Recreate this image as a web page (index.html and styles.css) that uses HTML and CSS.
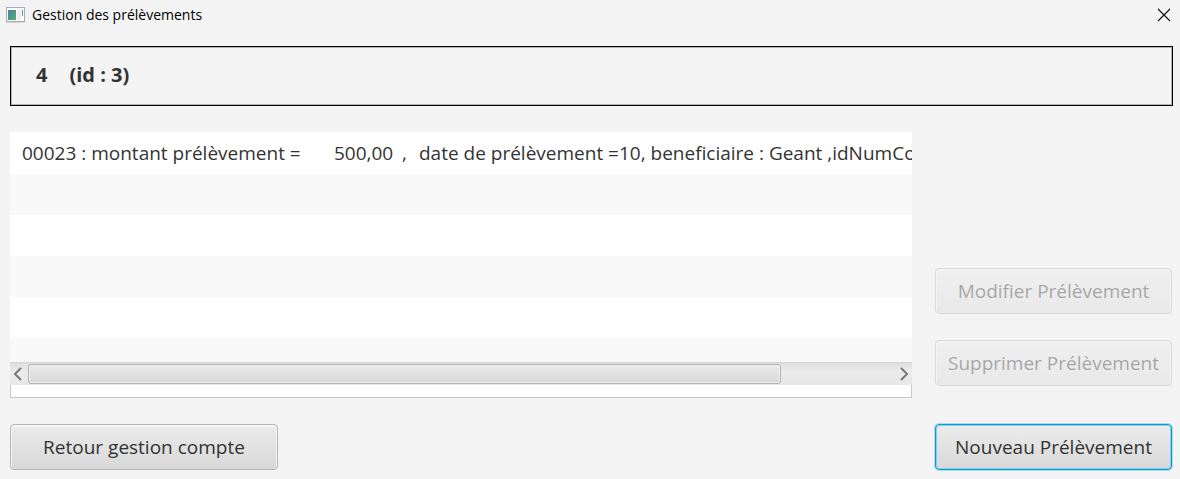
FILE: index.html
```html
<!DOCTYPE html>
<html lang="fr">
<head>
<meta charset="utf-8">
<title>Gestion des prélèvements</title>
<link rel="stylesheet" href="styles.css">
</head>
<body>
<header class="titlebar">
  <svg class="app-icon" width="20" height="16" viewBox="0 0 20 16" aria-hidden="true">
    <defs><linearGradient id="pane" x1="0" y1="0" x2="1" y2="1"><stop offset="0" stop-color="#4a7fae"/><stop offset="1" stop-color="#58ad6c"/></linearGradient></defs>
    <rect x="0.5" y="0.5" width="18" height="14" fill="#fafafa" stroke="#a9adb3"/>
    <path d="M0 15.5H19" stroke="#d0d2d4"/>
    <rect x="2" y="3" width="8" height="10" fill="url(#pane)"/>
    <rect x="11" y="3" width="4" height="10" fill="#ededed"/>
    <rect x="16" y="3" width="1" height="6" fill="url(#pane)"/>
  </svg>
  <h1 class="title">Gestion des prélèvements</h1>
  <button class="close" type="button" aria-label="Fermer">
    <svg width="14" height="14" viewBox="0 0 14 14"><path d="M1 1L13 13M13 1L1 13" stroke="#111" stroke-width="1.2" fill="none"/></svg>
  </button>
</header>
<main class="content">
  <section class="account"><span>4</span><span>(id : 3)</span></section>
  <div class="columns">
    <div class="list">
      <ul class="rows">
        <li class="row"><span class="label">00023 : montant prélèvement =</span><span class="amount">500,00</span><span class="comma">,</span><span>date de prélèvement =10, beneficiaire : Geant ,idNumCo</span></li>
        <li class="row"></li>
        <li class="row"></li>
        <li class="row"></li>
        <li class="row"></li>
        <li class="row"></li>
      </ul>
      <div class="scrollbar">
        <button class="arrow" type="button" aria-label="Défiler à gauche"><svg width="9" height="14" viewBox="0 0 9 14"><path d="M8 1L2 7L8 13" stroke="#777" stroke-width="2" fill="none"/></svg></button>
        <div class="track"><div class="thumb"></div></div>
        <button class="arrow next" type="button" aria-label="Défiler à droite"><svg width="9" height="14" viewBox="0 0 9 14"><path d="M1 1L7 7L1 13" stroke="#777" stroke-width="2" fill="none"/></svg></button>
      </div>
      <div class="list-foot"></div>
    </div>
    <div class="actions">
      <button class="btn" type="button" disabled>Modifier Prélèvement</button>
      <button class="btn" type="button" disabled>Supprimer Prélèvement</button>
    </div>
    <button class="btn back" type="button">Retour gestion compte</button>
    <button class="btn primary" type="button">Nouveau Prélèvement</button>
  </div>
</main>
</body>
</html>
```
FILE: styles.css
```css
* { box-sizing: border-box; }
body {
  margin: 0;
  background: #f4f4f4;
  color: #333;
  font-family: "Open Sans", "Noto Sans", sans-serif;
  font-size: 19px;
  line-height: 28px;
}
button { margin: 0; padding: 0; border: 0; background: none; font: inherit; color: inherit; }
svg { display: block; }
.titlebar {
  display: flex;
  align-items: center;
  height: 33px;
  padding: 0 9px 4px 6px;
  background: #f3f3f3;
  color: #000;
}
.title { flex: 1; margin: 0 0 0 6px; font-size: 14px; font-weight: 400; line-height: 20px; }
.content { padding: 13px 8px 9px 10px; }
.account {
  display: flex;
  gap: 22px;
  margin-right: -1px;
  padding: 14px 25px 16px;
  border: 1px solid #000;
  box-shadow: inset 0 0 0 1px #b4b4b4;
  font-size: 20px;
  font-weight: 700;
  line-height: 28px;
}
.columns {
  display: grid;
  grid-template-columns: 1fr 237px;
  gap: 26px 23px;
  margin-top: 26px;
}
.list { min-width: 0; background: #fff; }
.rows { height: 230px; margin: 0; padding: 0; overflow: hidden; list-style: none; }
.row { display: flex; height: 41px; padding: 7px 12px; white-space: nowrap; }
.row:first-child { height: 42px; }
.row:nth-child(even) { background: #f9f9f9; }
.label { flex: 0 0 312px; }
.amount { flex: 0 0 68px; }
.comma { flex: 0 0 17px; }
.scrollbar {
  display: flex;
  height: 23px;
  border-top: 1px solid #d4d4d4;
  background: linear-gradient(#dedede, #ececec 40%, #e6e6e6);
}
.arrow { display: flex; align-items: center; width: 18px; padding: 0 3px; }
.next { justify-content: flex-end; }
.track { flex: 1; padding: 1px 0; }
.thumb {
  width: 87%;
  height: 20px;
  border: 1px solid #b2b2b2;
  border-radius: 3px;
  background: linear-gradient(#ebebeb, #d8d8d8);
  box-shadow: inset 0 0 0 1px #f0f0f0;
}
.list-foot { height: 13px; border: 1px solid #c8c8c8; border-top: 0; }
.actions { display: flex; flex-direction: column; justify-content: flex-end; gap: 26px; padding-bottom: 12px; }
.btn {
  height: 46px;
  border: 1px solid #b5b5b5;
  border-radius: 4px;
  background: linear-gradient(#ececec, #d8d8d8);
  box-shadow: inset 0 1px 0 1px #f5f5f5;
  text-align: center;
}
.btn:disabled { opacity: 0.4; }
.back { width: 268px; }
.primary { border: 1px solid #039ed3; box-shadow: 0 0 0 1px #a9dcee, inset 0 0 0 1px #8fcde3; }
```
